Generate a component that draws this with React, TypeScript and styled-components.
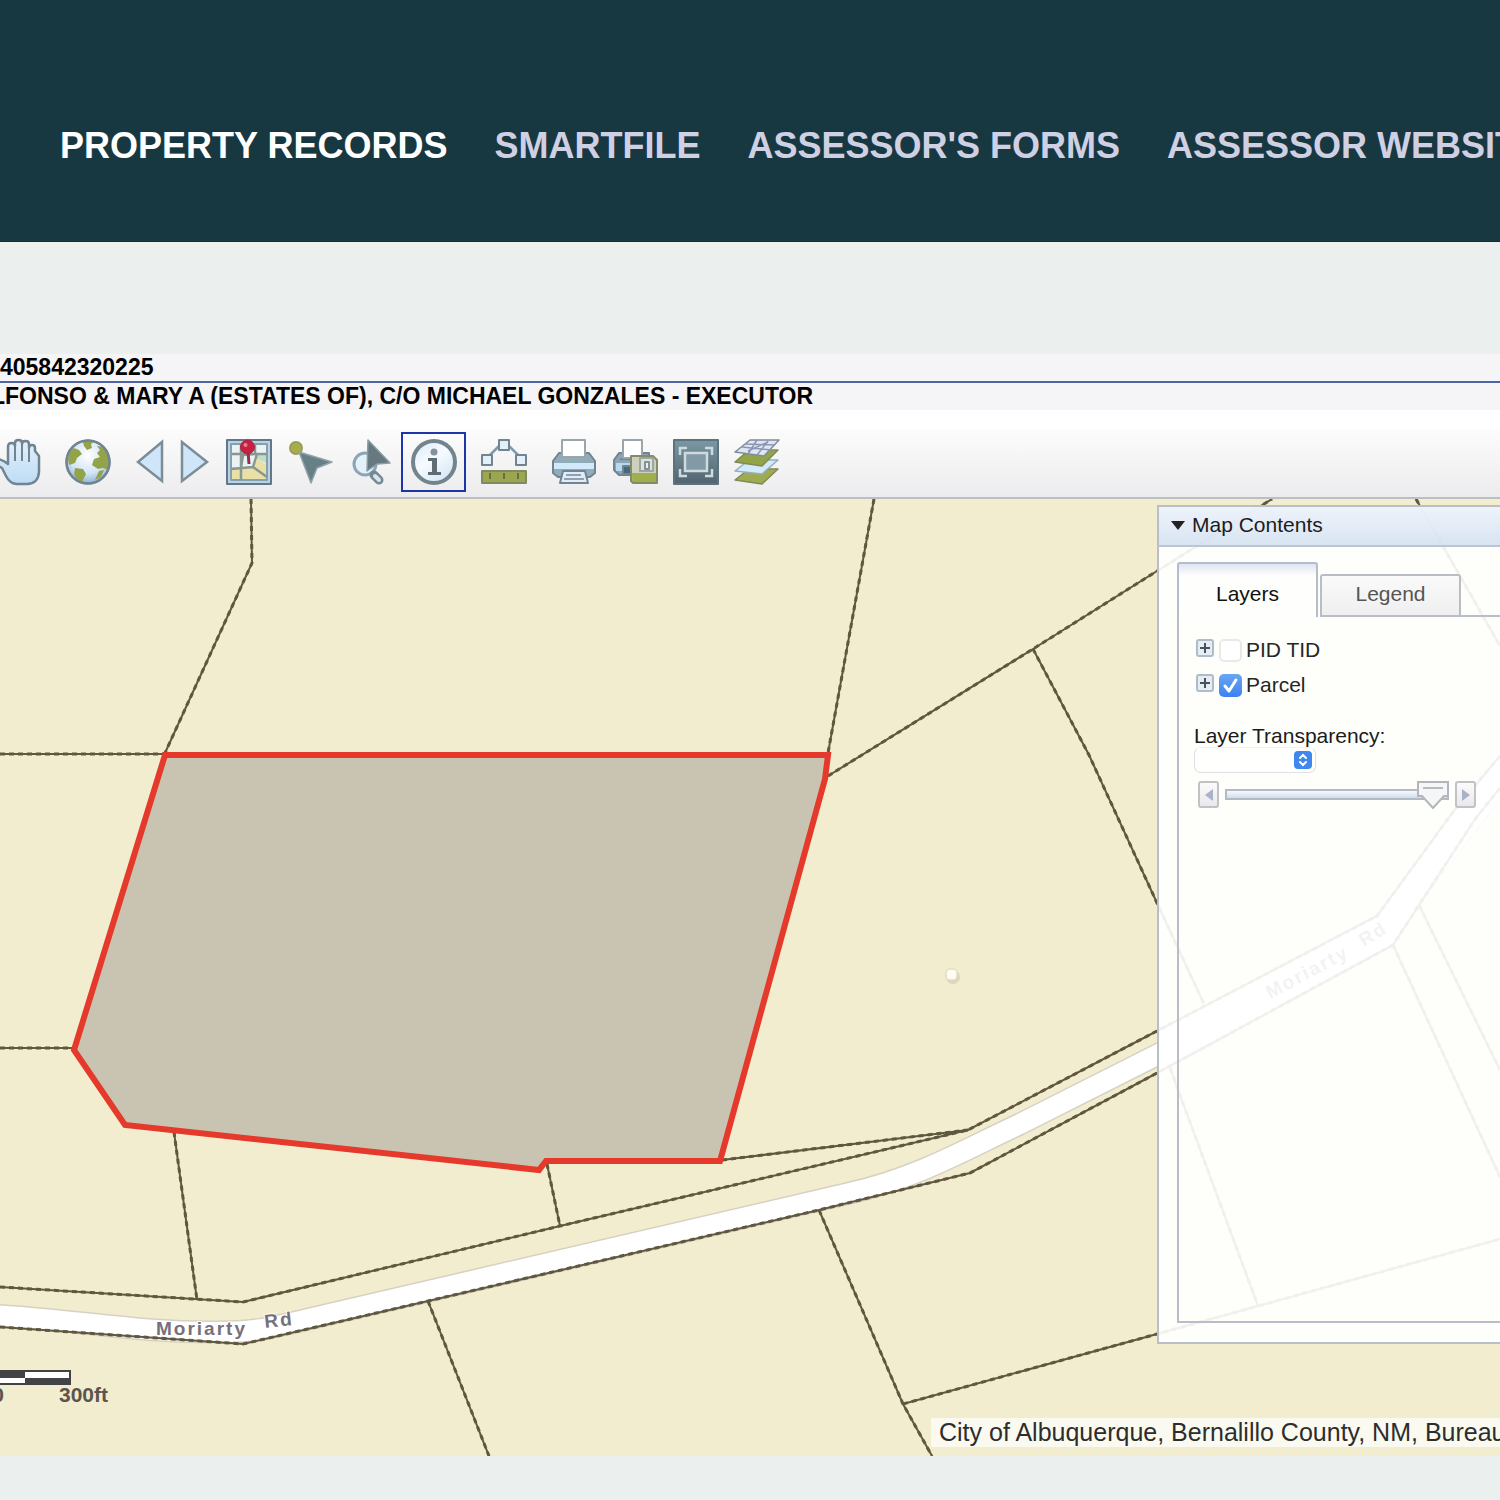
import React, { useState } from "react";
import styled, { createGlobalStyle, css } from "styled-components";

const GlobalStyle = createGlobalStyle`
  *, *::before, *::after { box-sizing: border-box; }
  html { background: #ebf0ee; }
  body {
    margin: 0;
    overflow-x: hidden;
    font-family: "Liberation Sans", Arial, Helvetica, sans-serif;
    color: #000;
  }
  button, input, select { font: inherit; margin: 0; }
`;

const Header = styled.header`
  display: flex;
  height: 242px;
  padding: 50px 0 0 60px;
  align-items: center;
  overflow: hidden;
  background: #183841;
  border-bottom: 1px solid #152c31;
`;

const Nav = styled.nav`
  display: flex;
  gap: 47px;
`;

const NavLink = styled.a<{ $current?: boolean }>`
  flex: none;
  font-size: 36px;
  line-height: 44px;
  font-weight: 700;
  white-space: nowrap;
  text-decoration: none;
  color: ${(p) => (p.$current ? "#ffffff" : "#d0d0e4")};
`;

const Main = styled.main`
  padding-top: 112px;
  padding-bottom: 44px;
`;

const Facts = styled.section`
  background: #f5f4f6;
  overflow: hidden;
  border-bottom: 19px solid #fff;
`;

const Fact = styled.p<{ $shift: number; $ruled?: boolean }>`
  margin: 0;
  margin-left: ${(p) => -p.$shift}px;
  font-size: 23px;
  line-height: 27px;
  font-weight: 700;
  white-space: nowrap;
  ${(p) => p.$ruled && css`border-bottom: 2px solid #4f64a4;`}
`;

const Toolbar = styled.div`
  display: flex;
  align-items: center;
  gap: 15px;
  height: 70px;
  padding-bottom: 2px;
  overflow: hidden;
  background: linear-gradient(#fcfcfc, #ececee);
  border-bottom: 2px solid #bcbfc2;
`;

const Tool = styled.button<{ $width?: number; $lead?: number; $active?: boolean }>`
  display: flex;
  flex: none;
  justify-content: center;
  align-items: center;
  width: ${(p) => p.$width ?? 46}px;
  height: 60px;
  margin-left: ${(p) => p.$lead ?? 0}px;
  padding: 0;
  background: none;
  border: ${(p) => (p.$active ? "2px solid #1c35a8" : "0")};
  svg { flex: none; overflow: visible; }
`;

const MapArea = styled.section`
  position: relative;
  height: 957px;
  overflow: hidden;
  background: #f2edcf;
`;

const MapDrawing = styled.svg`
  position: absolute;
  inset: 0;
  width: 100%;
  height: 100%;
`;

const ScaleBar = styled.div`
  position: absolute;
  left: -68px;
  bottom: 51px;
  width: 176px;
  font-size: 21px;
  line-height: 20px;
  font-weight: 700;
  color: #5c554c;
  svg { display: block; }
`;

const ScaleLabels = styled.div`
  display: flex;
  justify-content: space-between;
  padding-left: 37px;
`;

const Attribution = styled.div`
  position: absolute;
  left: 931px;
  right: 0;
  bottom: 9px;
  padding: 0 8px;
  overflow: hidden;
  font-size: 25px;
  line-height: 29px;
  white-space: nowrap;
  color: #2d2d2d;
  background: rgba(255, 255, 255, 0.7);
`;

const Panel = styled.aside`
  position: absolute;
  top: 6px;
  right: -20px;
  width: 363px;
  display: flex;
  flex-direction: column;
  height: 839px;
  font-size: 21px;
  line-height: 24px;
  border: 2px solid #b8bfc9;
  background: rgba(255, 255, 255, 0.91);
`;

const PanelTitle = styled.button`
  display: flex;
  align-items: center;
  gap: 7px;
  height: 40px;
  padding: 0 0 2px 12px;
  border: 0;
  border-bottom: 2px solid #bcc5d2;
  background: linear-gradient(rgba(233, 240, 250, 0.8), rgba(208, 222, 240, 0.8));
  color: #1c1c1c;
`;

const PanelBody = styled.div`
  display: flex;
  flex: 1;
  flex-direction: column;
  padding: 15px 0 19px 18px;
`;

const Tabs = styled.div`
  display: flex;
  align-items: flex-end;
  gap: 2px;
  &::after {
    content: "";
    flex: 1;
    align-self: flex-end;
    margin-left: -2px;
    border-bottom: 2px solid #b9bdc8;
  }
`;

const Tab = styled.button<{ $current?: boolean }>`
  width: 141px;
  height: 43px;
  padding: 0 0 4px;
  border: 2px solid #b9bdc4;
  border-radius: 3px 3px 0 0;
  color: #555;
  background: linear-gradient(#fafafa, #efefef);
  ${(p) =>
    p.$current &&
    css`
      height: 55px;
      padding: 7px 0 0;
      border-color: #b4bccd;
      border-bottom: 0;
      color: #111;
      background: linear-gradient(#dfe5f2, rgba(255, 255, 255, 0.4) 12px);
    `}
`;

const TabBody = styled.div`
  flex: 1;
  padding: 21px 0 0 15px;
  border: 2px solid #b9bdc8;
  border-top: 0;
  border-right: 0;
`;

const Tree = styled.ul`
  display: flex;
  flex-direction: column;
  gap: 11px;
  margin: 0 0 28px;
  padding: 0 0 0 2px;
  list-style: none;
`;

const TreeRow = styled.li`
  display: flex;
  align-items: center;
  gap: 5px;
`;

const Expander = styled.button`
  display: flex;
  width: 18px;
  height: 18px;
  margin-bottom: 4px;
  padding: 0;
  border: 0;
  background: none;
`;

const CheckLabel = styled.label`
  position: relative;
  display: flex;
  align-items: center;
  gap: 4px;
  color: #262626;
  svg {
    position: absolute;
    left: 0;
    pointer-events: none;
  }
`;

const CheckBox = styled.input`
  appearance: none;
  width: 23px;
  height: 23px;
  border: 2px solid #e9e9ea;
  border-radius: 5px;
  background: #fff;
  &:checked {
    border: 0;
    background: linear-gradient(#69a6f2, #3d82f0);
  }
`;

const FieldLabel = styled.label`
  display: block;
  line-height: 22px;
  color: #1b1b1b;
`;

const SelectWrap = styled.div`
  position: relative;
  width: 122px;
  height: 26px;
  svg {
    position: absolute;
    top: 4px;
    right: 4px;
    pointer-events: none;
  }
`;

const Select = styled.select`
  appearance: none;
  width: 100%;
  height: 100%;
  border: 1px solid #dfe0e3;
  border-top-color: #f2f2f2;
  border-radius: 7px;
  background: rgba(255, 255, 255, 0.8);
`;

const SliderRow = styled.div`
  display: flex;
  align-items: center;
  gap: 6px;
  margin-top: 8px;
  padding-left: 4px;
`;

const Step = styled.button`
  display: flex;
  align-items: center;
  justify-content: center;
  width: 21px;
  height: 27px;
  padding: 0;
  border: 2px solid #c0c2c6;
  border-radius: 3px;
  background: linear-gradient(#fbfbfb, #e9e9ec);
`;

const SliderTrack = styled.div`
  position: relative;
  width: 224px;
  height: 27px;
`;

const Range = styled.input`
  appearance: none;
  display: block;
  width: 100%;
  height: 27px;
  background: none;
  &::-webkit-slider-runnable-track {
    height: 11px;
    border: 2px solid #b4bac4;
    background: linear-gradient(#f6f9fc, #cfdeec);
  }
  &::-webkit-slider-thumb {
    appearance: none;
    width: 32px;
    height: 27px;
    margin-top: -8px;
    background: transparent;
  }
`;

const Thumb = styled.svg`
  position: absolute;
  top: 0;
  pointer-events: none;
`;

const line = "#708591";
const pale = "#cfe6fa";

function Icon({ width = 46, children }: { width?: number; children: React.ReactNode }) {
  return (
    <svg width={width} height="46" viewBox={`0 0 ${width} 46`} fill="none" stroke={line} strokeWidth="2" strokeLinejoin="round" aria-hidden="true">
      {children}
    </svg>
  );
}

const HandIcon = () => (
  <Icon>
    <defs>
      <linearGradient id="palm" x2="0" y2="1">
        <stop offset="0" stopColor="#e4f0fa" />
        <stop offset="1" stopColor="#bddcf6" />
      </linearGradient>
    </defs>
    <path fill="url(#palm)" strokeWidth="2.500" d="M13 25V8q0-4 3.500-4T20 7V4q0-3 3.500-3T27 4v1q0-3 3.500-3T34 5v4q0-3 3-3t3 3v3l4 5v16q-1 12-12 12H22Q15 45 11 37L7 29 0 25q-3-5 2-5 5 0 11 5z" />
    <path d="M20 6v16M27 5v17M34 7v16" />
  </Icon>
);

const GlobeIcon = () => (
  <Icon>
    <defs>
      <radialGradient id="sea" cx=".5" cy=".35" r=".65">
        <stop offset="0" stopColor="#fff" />
        <stop offset=".65" stopColor="#d2e4f6" />
        <stop offset="1" stopColor="#90b3d4" />
      </radialGradient>
    </defs>
    <circle cx="23" cy="23" r="21.500" fill="url(#sea)" />
    <g fill="#93a34a" stroke="none">
      <path d="M3 20Q4 12 9 9l5 2 3 4-5 4-2 5-6 2zM18 3q5-2 12-1l-4 3 1 4-5 2-3-4zM32 7l6 1q6 7 6 15l-1 8-5-2-5 1-6-4 2-6 6-2-3-4 3-3zM34 32l5-1-3 7-6 3zM10 29l8 1 3 5-4 8q-6-2-8-8z" />
    </g>
    <circle cx="23" cy="23" r="21.500" strokeWidth="2.500" />
  </Icon>
);

const PrevIcon = () => (
  <Icon width={31}><path fill={pale} strokeWidth="2.500" stroke="#7c8d98" strokeLinejoin="miter" d="M27 3v39L3 23z" /></Icon>
);
const NextIcon = () => (
  <Icon width={30}><path fill={pale} strokeWidth="2.500" stroke="#7c8d98" strokeLinejoin="miter" d="M1 3v39L26 23z" /></Icon>
);

const MapIcon = () => (
  <Icon>
    <rect x="1" y="1" width="44" height="44" fill="#bcd2e2" stroke="#60798a" strokeWidth="2" />
    <path d="M5 5h36v36H5z" fill="#eaf2f3" stroke="#85a0af" />
    <path d="M6 28h21l4-8 9 5v15H6z" fill="#e8e0a6" stroke="none" />
    <path d="M29 15h11v9l-9-4z" fill="#c4dbc5" stroke="none" />
    <path d="M6 15h34M5 30l22-2 14 10M15 6v35M15 29l2-13 12-1V6M27 28l4-13h10" stroke="#879791" strokeWidth="2.500" />
    <path d="M22 12l1 13" stroke="#913047" strokeWidth="3" />
    <circle cx="21.500" cy="8" r="7" fill="#c91f41" stroke="#a22a47" strokeWidth="1" />
    <circle cx="19.500" cy="6" r="2" fill="#e58091" stroke="none" />
  </Icon>
);

const SelectIcon = () => (
  <Icon>
    <circle cx="9" cy="9" r="6" fill="#a8ad4c" stroke="#999d58" />
    <path fill="#678086" stroke="#90a3aa" strokeWidth="1.500" d="M12 13l33 10-15 6-6 15z" />
  </Icon>
);

const ZoomSelectIcon = () => (
  <Icon>
    <circle cx="17" cy="25" r="11" fill="#e5f1f9" stroke="#8ba5b8" strokeWidth="3" />
    <path d="M26 36l5 5" strokeWidth="9" stroke="#718a97" strokeLinecap="round" />
    <path d="M27 37l4 4" strokeWidth="4" stroke="#dce4e8" strokeLinecap="round" />
    <path fill="#65797f" stroke="#8b9da4" strokeWidth="1.500" d="M20 1l22 23-13 1-10 7z" />
  </Icon>
);

const InfoIcon = () => (
  <Icon>
    <defs>
      <linearGradient id="info" x2=".7" y2="1">
        <stop offset="0" stopColor="#d8e9f8" />
        <stop offset=".5" stopColor="#f7fbff" />
        <stop offset="1" stopColor="#d5e6f5" />
      </linearGradient>
    </defs>
    <circle cx="23" cy="23" r="21" fill="url(#info)" stroke="#73848d" strokeWidth="4" />
    <circle cx="23" cy="13" r="3.500" fill="#84939a" stroke="none" />
    <path d="M17 19h9v14h4v3H17v-3h4V22h-4z" fill="#5e6c73" stroke="none" />
  </Icon>
);

const MeasureIcon = () => (
  <Icon>
    <path d="M7 18l12-12h8l12 12" stroke="#8299a8" strokeWidth="2.500" />
    <path fill="#e4f0f8" strokeWidth="2" d="M18 1h10v10H18zM1 16h10v10H1zM35 16h10v10H35z" />
    <path fill="#9ba64e" stroke="#7f8a64" strokeWidth="2" d="M1 32h44v12H1z" />
    <path d="M9 34v6M23 34v6M37 34v6" stroke="#687040" />
  </Icon>
);

const PrintIcon = () => (
  <Icon>
    <path fill="#92abb9" d="M8 14h30l6 8v12l-5 4H7l-5-4V22z" />
    <path d="M3 24h40v6H3z" fill="#d2e9fb" stroke="none" />
    <path fill="#fff" stroke="#9aa5ac" d="M11 1h23v17H11z" />
    <path fill="#e1ecf8" d="M12 32h22l3 12H9z" />
    <path d="M15 36h15M13 40h20" stroke="#8fa1b0" />
  </Icon>
);

const PrintSaveIcon = () => (
  <Icon>
    <path fill="#8aa5b5" d="M7 14h30v22H7l-5-5V21z" />
    <path d="M4 24h16v8H4z" fill="#b8d8ef" stroke="none" />
    <path d="M11 27h8v8h-8zM8 20h10" fill="#47687b" />
    <path fill="#fff" stroke="#9aa5ac" d="M11 1h19v18H11z" />
    <path fill="#aeb477" stroke="#838b68" d="M19 17h22l4 4v23H21l-2-2z" />
    <path d="M20 31h24v12H21z" fill="#a0ae4b" stroke="none" />
    <path d="M20 18h21l3 4v12H20z" fill="#cbd1be" stroke="none" />
    <path d="M28 19h13v13H28z" fill="#dde2e1" stroke="#9ba5a2" />
    <path d="M33 23h4v7h-4z" fill="#eef0ef" stroke="#829395" />
  </Icon>
);

const ExtentIcon = () => (
  <Icon>
    <defs>
      <linearGradient id="extent" x2="0" y2="1">
        <stop offset="0" stopColor="#7b98a2" />
        <stop offset="1" stopColor="#51646f" />
      </linearGradient>
    </defs>
    <path d="M1 1h44v44H1z" fill="url(#extent)" stroke="#5b7380" />
    <g stroke="#cedbe1" strokeWidth="2.500" strokeLinejoin="miter">
      <path d="M12 14h22v18H12z" fill="#829aa5" />
      <path d="M7 16V9h7M32 9h7v7M39 30v7h-7M14 37H7v-7" />
    </g>
  </Icon>
);

const LayersIcon = () => (
  <Icon>
    <g strokeWidth="1.500">
      <path fill="#9fab50" stroke="#7f8b56" d="M15 30h29L28 45 1 41z" />
      <path fill="#d5eaf9" stroke="#94aebf" d="M15 21h29L28 35 1 32z" />
      <path fill="#93a446" stroke="#7f8b56" d="M15 11h29L28 27 1 23z" />
      <path fill="#dfe6f0" stroke="#7d8c9e" d="M16 1h29L30 17 1 13z" />
      <path d="M8 8l29 3M23 1L14 15M11 5l30 1M34 2L23 16M14 12l20-9" stroke="#8b96b6" />
    </g>
  </Icon>
);

const tools = [
  { label: "Pan", icon: <HandIcon />, lead: -5 },
  { label: "Full extent", icon: <GlobeIcon />, lead: 9 },
  { label: "Previous extent", icon: <PrevIcon />, lead: 9, width: 31 },
  { label: "Next extent", icon: <NextIcon />, width: 30 },
  { label: "Locate", icon: <MapIcon /> },
  { label: "Select", icon: <SelectIcon /> },
  { label: "Zoom to selection", icon: <ZoomSelectIcon /> },
  { label: "Identify", icon: <InfoIcon />, lead: -8, width: 65, active: true },
  { label: "Measure", icon: <MeasureIcon /> },
  { label: "Print", icon: <PrintIcon />, lead: 9 },
  { label: "Save print", icon: <PrintSaveIcon /> },
  { label: "Fit window", icon: <ExtentIcon /> },
  { label: "Layers", icon: <LayersIcon /> },
];

const boundaries = [
  "M251 499L252 563L165 753",
  "M0 754H165",
  "M874 499L828 753",
  "M828 776L1033 649L1157 571L1272 499",
  "M1033 649L1089 755L1157 903L1204 1004",
  "M1416 499L1500 646",
  "M0 1048H74",
  "M174 1132L197 1300",
  "M547 1164L560 1226",
  "M0 1287L243 1302L560 1226L968 1130L1157 1031L1377 916L1453 812L1500 756",
  "M722 1160L968 1130",
  "M0 1327L243 1344L428 1301L819 1210L970 1173L1157 1073L1393 945L1419 905L1476 818L1500 788",
  "M428 1301L489 1456",
  "M819 1210L903 1404L932 1456",
  "M903 1404L1157 1334L1258 1306L1500 1239",
  "M1170 1068L1258 1306",
  "M1393 945L1500 1177",
  "M1419 905L1500 1070",
];

const road = "M-10 1315C80 1320 130 1332 215 1332C260 1332 270 1328 330 1314L850 1193C920 1177 970 1147 1020 1124L1157 1055L1385 930L1510 770";

function ParcelMap() {
  return (
    <MapDrawing viewBox="0 499 1500 957" preserveAspectRatio="xMinYMin slice" role="img" aria-label="Parcel map">
      <path d={road} fill="none" stroke="#d6d1c3" strokeWidth="23" />
      <path d={road} fill="none" stroke="#ffffff" strokeWidth="20" />
      <path d="M1157 1031L1377 916L1453 812L1500 756V788L1476 818L1419 905L1393 945L1157 1073z" fill="#ffffff" />
      <g fill="none" stroke="#5f583f">
        {boundaries.map((d) => (
          <g key={d}>
            <path d={d} strokeWidth="2" />
            <path d={d} strokeWidth="3" strokeDasharray="5 4" />
          </g>
        ))}
      </g>
      <circle cx="953" cy="977" r="7" fill="#ddd6bd" />
      <rect x="946" y="969" width="11" height="11" rx="4" fill="#fffdf2" stroke="#e3dcc6" strokeWidth="1.500" />
      <path d="M165 755H828L825 779L720 1161H546L539 1170L125 1125L74 1050Z" fill="#c9c4b1" stroke="#e5392b" strokeWidth="6" />
      <g fill="#77707a" stroke="#fff" strokeWidth="2" paintOrder="stroke" fontSize="19" fontWeight="700" letterSpacing="2" fontFamily="Liberation Sans, Arial, sans-serif">
        <text x="156" y="1335">Moriarty</text>
        <text transform="translate(265 1328) rotate(-6)">Rd</text>
        <text transform="translate(1270 999) rotate(-28)">Moriarty</text>
        <text transform="translate(1364 947) rotate(-32)">Rd</text>
      </g>
    </MapDrawing>
  );
}

function LayerItem({ name, initial }: { name: string; initial: boolean }) {
  const [checked, setChecked] = useState(initial);
  return (
    <TreeRow>
      <Expander aria-label={`Expand ${name}`}>
        <svg width="18" height="18" viewBox="0 0 18 18">
          <rect x="1" y="1" width="16" height="16" rx="2" fill="#e6edf4" stroke="#afbdcb" strokeWidth="2" />
          <path d="M4 9h10M9 4v10" stroke="#46525c" strokeWidth="2" />
        </svg>
      </Expander>
      <CheckLabel>
        <CheckBox type="checkbox" checked={checked} onChange={(e) => setChecked(e.target.checked)} />
        {checked && (
          <svg width="23" height="23" viewBox="0 0 23 23">
            <path d="M6 12l4 5 7-11" fill="none" stroke="#fff" strokeWidth="3" strokeLinecap="round" strokeLinejoin="round" />
          </svg>
        )}
        {name}
      </CheckLabel>
    </TreeRow>
  );
}

function MapContents() {
  const [tab, setTab] = useState("Layers");
  const [opacity, setOpacity] = useState(100);
  return (
    <Panel>
      <PanelTitle aria-expanded="true">
        <svg width="14" height="9" viewBox="0 0 14 9"><path d="M0 0h14L7 9z" fill="#222" /></svg>
        Map Contents
      </PanelTitle>
      <PanelBody>
        <Tabs role="tablist">
          {["Layers", "Legend"].map((name) => (
            <Tab key={name} role="tab" aria-selected={tab === name} $current={tab === name} onClick={() => setTab(name)}>
              {name}
            </Tab>
          ))}
        </Tabs>
        <TabBody>
          <Tree>
            <LayerItem name="PID TID" initial={false} />
            <LayerItem name="Parcel" initial />
          </Tree>
          <FieldLabel htmlFor="layer">Layer Transparency:</FieldLabel>
          <SelectWrap>
            <Select id="layer" defaultValue=""><option value="" /></Select>
            <svg width="18" height="18" viewBox="0 0 18 18">
              <rect width="18" height="18" rx="4" fill="#3f86ee" />
              <path d="M6 7l3-3 3 3M6 11l3 3 3-3" fill="none" stroke="#fff" strokeWidth="2" strokeLinecap="round" />
            </svg>
          </SelectWrap>
          <SliderRow>
            <Step aria-label="Decrease" onClick={() => setOpacity(Math.max(0, opacity - 10))}>
              <svg width="8" height="12" viewBox="0 0 8 12"><path d="M8 0v12L0 6z" fill="#a9b1cb" /></svg>
            </Step>
            <SliderTrack>
              <Range type="range" aria-label="Layer transparency" min="0" max="100" value={opacity} onChange={(e) => setOpacity(Number(e.target.value))} />
              <Thumb width="32" height="28" viewBox="0 0 32 28" style={{ left: `${(192 * opacity) / 100}px` }}>
                <path d="M1 1h30v14h-4L16 27 5 15H1z" fill="#f5f6f7" stroke="#b2b5ba" strokeWidth="2" />
                <path d="M6 7h20" stroke="#b8babd" strokeWidth="2" />
              </Thumb>
            </SliderTrack>
            <Step aria-label="Increase" onClick={() => setOpacity(Math.min(100, opacity + 10))}>
              <svg width="8" height="12" viewBox="0 0 8 12"><path d="M0 0v12l8-6z" fill="#a9b1cb" /></svg>
            </Step>
          </SliderRow>
        </TabBody>
      </PanelBody>
    </Panel>
  );
}

export default function App() {
  return (
    <>
      <GlobalStyle />
      <Header>
        <Nav>
          <NavLink href="#records" $current>PROPERTY RECORDS</NavLink>
          <NavLink href="#smartfile">SMARTFILE</NavLink>
          <NavLink href="#forms">ASSESSOR'S FORMS</NavLink>
          <NavLink href="#website">ASSESSOR WEBSITE</NavLink>
        </Nav>
      </Header>
      <Main>
        <Facts>
          <Fact $shift={0} $ruled>405842320225</Fact>
          <Fact $shift={9}>LFONSO &amp; MARY A (ESTATES OF), C/O MICHAEL GONZALES - EXECUTOR</Fact>
        </Facts>
        <Toolbar role="toolbar" aria-label="Map tools">
          {tools.map((t) => (
            <Tool key={t.label} aria-label={t.label} $width={t.width} $lead={t.lead} $active={t.active}>
              {t.icon}
            </Tool>
          ))}
        </Toolbar>
        <MapArea>
          <ParcelMap />
          <MapContents />
          <ScaleBar>
            <svg width="140" height="15" viewBox="0 0 140 15">
              <rect x="1" y="1" width="137" height="13" fill="#fff" stroke="#434345" strokeWidth="2" />
              <path d="M1 1h92v7H1zM93 8h46v6H93z" fill="#434345" />
            </svg>
            <ScaleLabels><span>150</span><span>300ft</span></ScaleLabels>
          </ScaleBar>
          <Attribution>City of Albuquerque, Bernalillo County, NM, Bureau of Land Management</Attribution>
        </MapArea>
      </Main>
    </>
  );
}
